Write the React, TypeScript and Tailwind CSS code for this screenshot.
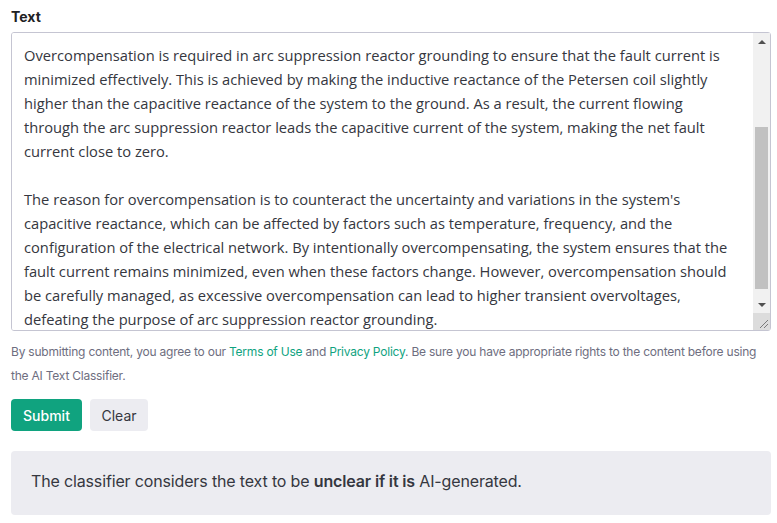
import { useLayoutEffect, useRef } from "react";

const body = `Overcompensation is required in arc suppression reactor grounding to ensure that the fault current is minimized effectively. This is achieved by making the inductive reactance of the Petersen coil slightly higher than the capacitive reactance of the system to the ground. As a result, the current flowing through the arc suppression reactor leads the capacitive current of the system, making the net fault current close to zero.

The reason for overcompensation is to counteract the uncertainty and variations in the system's capacitive reactance, which can be affected by factors such as temperature, frequency, and the configuration of the electrical network. By intentionally overcompensating, the system ensures that the fault current remains minimized, even when these factors change. However, overcompensation should be carefully managed, as excessive overcompensation can lead to higher transient overvoltages, defeating the purpose of arc suppression reactor grounding.`;

// drawn scrollbar, the screenshot browser hides the native one
function ScrollBar() {
  return (
    <div className="pointer-events-none absolute bottom-px right-px top-px flex w-[17px] flex-col bg-[#f1f1f1]">
      <div className="flex h-[17px] items-center justify-center">
        <div className="h-0 w-0 border-x-[4px] border-b-[4px] border-x-transparent border-b-[#505050]" />
      </div>
      <div className="flex-1">
        <div className="mx-[2px] mt-[77px] h-[162px] bg-[#c1c1c1]" />
      </div>
      <div className="flex h-[17px] items-center justify-center">
        <div className="h-0 w-0 border-x-[4px] border-t-[4px] border-x-transparent border-t-[#505050]" />
      </div>
      <div className="h-[17px] bg-[#dcdcdc]">
        <svg width="17" height="17" viewBox="0 0 17 17">
          <path d="M15 7 L7 15 M15 11 L11 15" stroke="#7a7a7a" strokeWidth="1" />
        </svg>
      </div>
    </div>
  );
}

export default function App() {
  const ref = useRef<HTMLTextAreaElement>(null);

  useLayoutEffect(() => {
    if (ref.current) ref.current.scrollTop = 150;
  }, []);

  return (
    <div className="pl-[11px] pr-[6px] pt-[7px] font-['Inter',sans-serif] text-[#353740]">
      <label className="block text-[14px] font-bold leading-5 text-[#202123]">
        Text
      </label>
      <div className="relative mt-[5px]">
        <textarea
          ref={ref}
          defaultValue={body}
          className="block h-[299px] w-full resize-none overflow-y-scroll rounded-[3px] border border-[#c5c5d2] bg-white pl-3 pr-[31px] pt-[160px] pb-1 font-['Open_Sans',sans-serif] text-[14.7px] leading-6 text-[#353740] outline-none [scrollbar-width:none] [&::-webkit-scrollbar]:hidden"
        />
        <ScrollBar />
      </div>
      <p className="mt-[9px] text-[12px] leading-6 tracking-[-0.22px] text-[#6e6e80]">
        By submitting content, you agree to our{" "}
        <a className="text-[#10a37f]">Terms of Use</a> and{" "}
        <a className="text-[#10a37f]">Privacy Policy</a>. Be sure you have
        appropriate rights to the content before using the AI Text Classifier.
      </p>
      <div className="mt-[11px] flex gap-2">
        <button className="h-8 w-[71px] rounded-[4px] bg-[#10a37f] text-[14px] font-medium text-white">
          Submit
        </button>
        <button className="h-8 w-[58px] rounded-[4px] bg-[#ececf1] text-[14px] text-[#353740]">
          Clear
        </button>
      </div>
      <div className="mt-5 flex h-16 items-center rounded-[4px] bg-[#ececf1] px-5 pb-1 text-[16px] tracking-[-0.15px] text-[#353740]">
        <span>
          The classifier considers the text to be{" "}
          <b className="font-semibold">unclear if it is</b> AI-generated.
        </span>
      </div>
    </div>
  );
}
